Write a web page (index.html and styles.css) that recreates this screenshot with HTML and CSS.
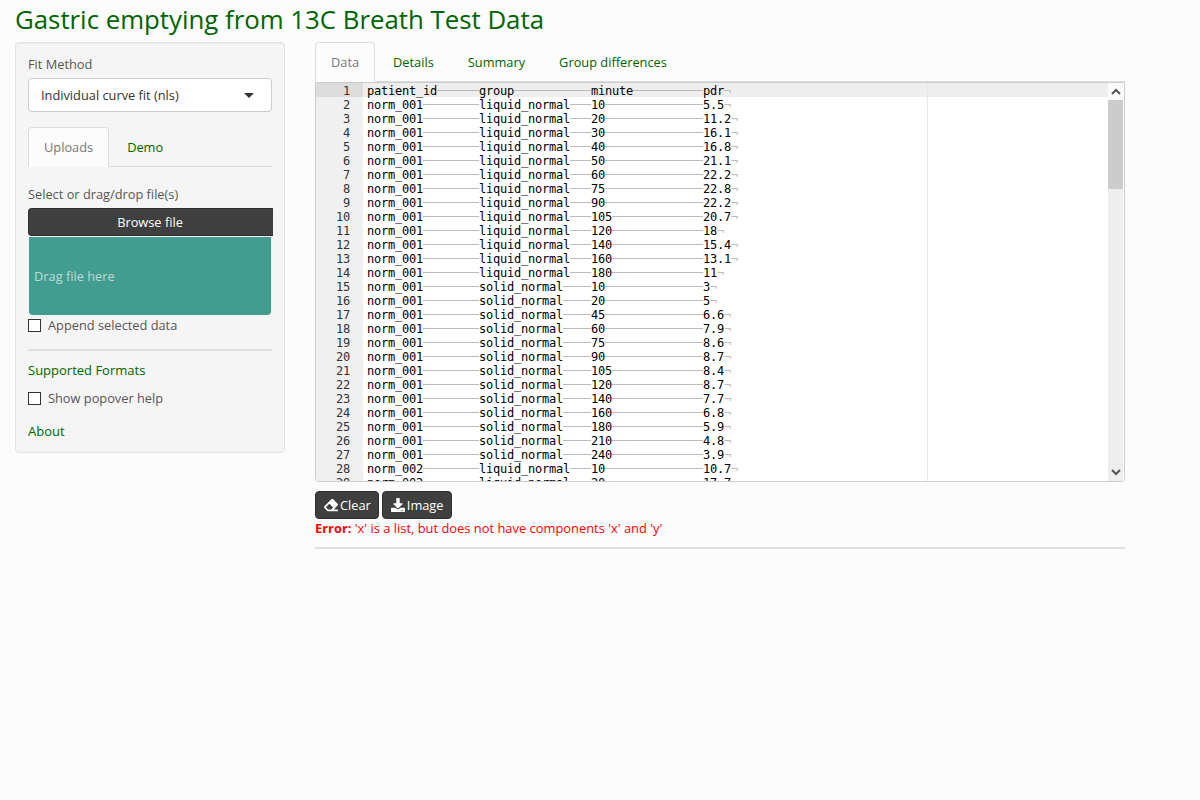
FILE: index.html
```html
<!DOCTYPE html>
<html lang="en">
<head>
    <meta charset="UTF-8">
    <title>Gastric emptying from 13C Breath Test Data</title>
    <link rel="stylesheet" href="styles.css">
</head>
<body>
    <h1 class="title">Gastric emptying from 13C Breath Test Data</h1>
    <div class="layout">
        <aside class="well">
            <div class="label">Fit Method</div>
            <div class="select">
                <span>Individual curve fit (nls)</span>
                <span class="caret"></span>
            </div>
            <ul class="tabs side-tabs">
                <li class="active">Uploads</li>
                <li>Demo</li>
            </ul>
            <div class="label drop-label">Select or drag/drop file(s)</div>
            <div class="browse">Browse file</div>
            <div class="dropzone">Drag file here</div>
            <div class="check append"><span class="box"></span>Append selected data</div>
            <hr class="side-rule">
            <div class="link">Supported Formats</div>
            <div class="check popover"><span class="box"></span>Show popover help</div>
            <div class="link about">About</div>
        </aside>
        <main class="content">
            <ul class="tabs main-tabs">
                <li class="active">Data</li>
                <li>Details</li>
                <li>Summary</li>
                <li>Group differences</li>
            </ul>
            <div class="editor">
                <div class="gutter">
                    <div class="num current">1</div>
                    <div class="num">2</div>
                    <div class="num">3</div>
                    <div class="num">4</div>
                    <div class="num">5</div>
                    <div class="num">6</div>
                    <div class="num">7</div>
                    <div class="num">8</div>
                    <div class="num">9</div>
                    <div class="num">10</div>
                    <div class="num">11</div>
                    <div class="num">12</div>
                    <div class="num">13</div>
                    <div class="num">14</div>
                    <div class="num">15</div>
                    <div class="num">16</div>
                    <div class="num">17</div>
                    <div class="num">18</div>
                    <div class="num">19</div>
                    <div class="num">20</div>
                    <div class="num">21</div>
                    <div class="num">22</div>
                    <div class="num">23</div>
                    <div class="num">24</div>
                    <div class="num">25</div>
                    <div class="num">26</div>
                    <div class="num">27</div>
                    <div class="num">28</div>
                    <div class="num">29</div>
                </div>
                <div class="lines">
                    <div class="ln current"><span class="c">patient_id</span><span class="c">group</span><span class="c">minute</span><span class="e">pdr</span></div>
                    <div class="ln"><span class="c">norm_001</span><span class="c">liquid_normal</span><span class="c">10</span><span class="e">5.5</span></div>
                    <div class="ln"><span class="c">norm_001</span><span class="c">liquid_normal</span><span class="c">20</span><span class="e">11.2</span></div>
                    <div class="ln"><span class="c">norm_001</span><span class="c">liquid_normal</span><span class="c">30</span><span class="e">16.1</span></div>
                    <div class="ln"><span class="c">norm_001</span><span class="c">liquid_normal</span><span class="c">40</span><span class="e">16.8</span></div>
                    <div class="ln"><span class="c">norm_001</span><span class="c">liquid_normal</span><span class="c">50</span><span class="e">21.1</span></div>
                    <div class="ln"><span class="c">norm_001</span><span class="c">liquid_normal</span><span class="c">60</span><span class="e">22.2</span></div>
                    <div class="ln"><span class="c">norm_001</span><span class="c">liquid_normal</span><span class="c">75</span><span class="e">22.8</span></div>
                    <div class="ln"><span class="c">norm_001</span><span class="c">liquid_normal</span><span class="c">90</span><span class="e">22.2</span></div>
                    <div class="ln"><span class="c">norm_001</span><span class="c">liquid_normal</span><span class="c">105</span><span class="e">20.7</span></div>
                    <div class="ln"><span class="c">norm_001</span><span class="c">liquid_normal</span><span class="c">120</span><span class="e">18</span></div>
                    <div class="ln"><span class="c">norm_001</span><span class="c">liquid_normal</span><span class="c">140</span><span class="e">15.4</span></div>
                    <div class="ln"><span class="c">norm_001</span><span class="c">liquid_normal</span><span class="c">160</span><span class="e">13.1</span></div>
                    <div class="ln"><span class="c">norm_001</span><span class="c">liquid_normal</span><span class="c">180</span><span class="e">11</span></div>
                    <div class="ln"><span class="c">norm_001</span><span class="c">solid_normal</span><span class="c">10</span><span class="e">3</span></div>
                    <div class="ln"><span class="c">norm_001</span><span class="c">solid_normal</span><span class="c">20</span><span class="e">5</span></div>
                    <div class="ln"><span class="c">norm_001</span><span class="c">solid_normal</span><span class="c">45</span><span class="e">6.6</span></div>
                    <div class="ln"><span class="c">norm_001</span><span class="c">solid_normal</span><span class="c">60</span><span class="e">7.9</span></div>
                    <div class="ln"><span class="c">norm_001</span><span class="c">solid_normal</span><span class="c">75</span><span class="e">8.6</span></div>
                    <div class="ln"><span class="c">norm_001</span><span class="c">solid_normal</span><span class="c">90</span><span class="e">8.7</span></div>
                    <div class="ln"><span class="c">norm_001</span><span class="c">solid_normal</span><span class="c">105</span><span class="e">8.4</span></div>
                    <div class="ln"><span class="c">norm_001</span><span class="c">solid_normal</span><span class="c">120</span><span class="e">8.7</span></div>
                    <div class="ln"><span class="c">norm_001</span><span class="c">solid_normal</span><span class="c">140</span><span class="e">7.7</span></div>
                    <div class="ln"><span class="c">norm_001</span><span class="c">solid_normal</span><span class="c">160</span><span class="e">6.8</span></div>
                    <div class="ln"><span class="c">norm_001</span><span class="c">solid_normal</span><span class="c">180</span><span class="e">5.9</span></div>
                    <div class="ln"><span class="c">norm_001</span><span class="c">solid_normal</span><span class="c">210</span><span class="e">4.8</span></div>
                    <div class="ln"><span class="c">norm_001</span><span class="c">solid_normal</span><span class="c">240</span><span class="e">3.9</span></div>
                    <div class="ln"><span class="c">norm_002</span><span class="c">liquid_normal</span><span class="c">10</span><span class="e">10.7</span></div>
                    <div class="ln"><span class="c">norm_002</span><span class="c">liquid_normal</span><span class="c">20</span><span class="e">17.7</span></div>
                    <div class="print-margin"></div>
                </div>
                <div class="scrollbar">
                    <div class="scroll-btn top">
                        <svg viewBox="0 0 10 7" width="10" height="7"><path d="M1 6 L5 2 L9 6" fill="none" stroke="#555" stroke-width="2"/></svg>
                    </div>
                    <div class="track"><div class="thumb"></div></div>
                    <div class="scroll-btn">
                        <svg viewBox="0 0 10 7" width="10" height="7"><path d="M1 1 L5 5 L9 1" fill="none" stroke="#555" stroke-width="2"/></svg>
                    </div>
                </div>
            </div>
            <div class="actions">
                <button class="btn">
                    <svg viewBox="0 0 512 512" width="14" height="14"><path fill="#fff" d="M497.941 273.941c18.745-18.745 18.745-49.137 0-67.882l-160-160c-18.745-18.745-49.136-18.746-67.883 0l-256 256c-18.745 18.745-18.745 49.137 0 67.882l96 96A48.004 48.004 0 0 0 144 480h356c6.627 0 12-5.373 12-12v-40c0-6.627-5.373-12-12-12H355.883l142.058-142.059zm-302.627-62.627l137.373 137.373L265.373 416H150.628l-80-80 124.686-124.686z"/></svg>
                    Clear
                </button>
                <button class="btn">
                    <svg viewBox="0 0 512 512" width="14" height="14"><path fill="#fff" d="M216 0h80c13.3 0 24 10.7 24 24v168h87.7c17.8 0 26.7 21.5 14.1 34.1L269.7 378.3c-7.5 7.5-19.8 7.5-27.3 0L90.1 226.1c-12.6-12.6-3.7-34.1 14.1-34.1H192V24c0-13.3 10.7-24 24-24zm296 376v112c0 13.3-10.7 24-24 24H24c-13.3 0-24-10.7-24-24V376c0-13.3 10.7-24 24-24h146.7l49 49c20.1 20.1 52.5 20.1 72.6 0l49-49H488c13.3 0 24 10.7 24 24zm-124 88c0-11-9-20-20-20s-20 9-20 20 9 20 20 20 20-9 20-20zm64 0c0-11-9-20-20-20s-20 9-20 20 9 20 20 20 20-9 20-20z"/></svg>
                    Image
                </button>
            </div>
            <p class="error"><strong>Error:</strong> 'x' is a list, but does not have components 'x' and 'y'</p>
            <hr class="main-rule">
        </main>
    </div>
</body>
</html>
```

FILE: styles.css
```css
* {
    box-sizing: border-box;
}
body {
    margin: 0;
    padding: 0 15px;
    background: #fcfcfc;
    color: #555;
    font-family: "Open Sans", sans-serif;
    font-size: 12.8px;
    line-height: 18px;
}
.title {
    margin: 0;
    height: 42px;
    color: #006400;
    font-size: 25.8px;
    font-weight: 400;
    line-height: 38px;
}
.layout {
    display: flex;
    align-items: flex-start;
    gap: 30px;
}

/* sidebar */
.well {
    width: 270px;
    height: 411px;
    padding: 12px 12px;
    background: #f5f5f5;
    border: 1px solid #e3e3e3;
    border-radius: 4px;
    box-shadow: inset 0 1px 1px rgba(0, 0, 0, 0.05);
}
.label {
    margin-top: 0;
    color: #555;
}
.select {
    display: flex;
    justify-content: space-between;
    align-items: center;
    height: 34px;
    margin-top: 5px;
    padding: 0 17px 0 12px;
    background: #fff;
    border: 1px solid #ccc;
    border-radius: 4px;
    color: #333;
}
.caret {
    width: 0;
    height: 0;
    border-left: 5px solid transparent;
    border-right: 5px solid transparent;
    border-top: 5px solid #333;
}
.tabs {
    display: flex;
    margin: 0;
    padding: 0;
    list-style: none;
    border-bottom: 1px solid #ddd;
}
.tabs li {
    height: 39px;
    padding: 10px 15px 0;
    margin-right: 2px;
    color: #006400;
    border: 1px solid transparent;
    border-radius: 4px 4px 0 0;
}
.tabs li.active {
    height: 40px;
    margin-bottom: -1px;
    color: #777;
    background: #fcfcfc;
    border-color: #ddd #ddd #fcfcfc;
}
.side-tabs {
    margin-top: 15px;
}
.drop-label {
    margin-top: 18px;
}
.browse {
    height: 28px;
    margin-top: 5px;
    margin-right: -1px;
    padding-right: 2px;
    background: #3f3f3f;
    border: 1px solid #2e2e2e;
    border-right: 0;
    border-radius: 4px 0 0 4px;
    color: #fff;
    text-align: center;
    line-height: 26px;
}
.dropzone {
    height: 78px;
    margin: 1px 1px 0;
    padding-left: 5px;
    background: #419d8f;
    border-radius: 0 0 4px 4px;
    color: rgba(255, 255, 255, 0.65);
    line-height: 78px;
}
.check {
    display: flex;
    align-items: center;
    gap: 7px;
}
.box {
    width: 13px;
    height: 13px;
    background: #fff;
    border: 1px solid #333;
}
.append {
    margin-top: 1px;
}
.side-rule {
    height: 2px;
    margin: 15px 0 0;
    background: #e0e0e0;
    border: 0;
}
.link {
    color: #006400;
    font-size: 13px;
}
.side-rule + .link {
    margin-top: 10px;
}
.popover {
    margin-top: 10px;
}
.about {
    margin-top: 15px;
}

/* main panel */
.content {
    width: 810px;
}
.editor {
    display: flex;
    height: 400px;
    overflow: hidden;
    background: #fff;
    border: 1px solid #ccc;
    border-radius: 0 0 4px 4px;
    font-family: "DejaVu Sans Mono", monospace;
    font-size: 12px;
    letter-spacing: -0.22px;
    line-height: 16px;
    color: #000;
}
.gutter {
    flex: none;
    width: 47px;
    height: 100%;
    background: #f0f0f0;
    color: #333;
}
.num {
    height: 14px;
    padding-right: 13px;
    text-align: right;
}
.num.current {
    background: #dcdcdc;
}
.lines {
    position: relative;
    flex: 1;
    overflow: hidden;
}
.ln {
    display: flex;
    height: 14px;
    padding-left: 4px;
}
.ln.current {
    background: #eee;
}
.c {
    display: flex;
    width: 112px;
}
.c::after {
    content: "";
    flex: 1;
    align-self: center;
    border-top: 1px solid #bbb;
}
.e::after {
    content: "¬";
    color: #bbb;
}
.print-margin {
    position: absolute;
    top: 0;
    bottom: 0;
    left: 564px;
    width: 1px;
    background: #e8e8e8;
}
.scrollbar {
    flex: none;
    display: flex;
    flex-direction: column;
    width: 16px;
    border-right: 1px solid #fff;
    background: #eee;
}
.scroll-btn {
    flex: none;
    display: flex;
    align-items: center;
    justify-content: center;
    height: 17px;
}
.scroll-btn.top {
    background: #fbfbfb;
}
.track {
    flex: 1;
}
.thumb {
    height: 89px;
    background: #ccc;
}
.actions {
    display: flex;
    gap: 3px;
    margin-top: 9px;
}
.btn {
    display: flex;
    align-items: center;
    gap: 2px;
    height: 28px;
    padding: 0 7px 0 8px;
    background: #3f3f3f;
    border: 1px solid #2e2e2e;
    border-radius: 4px;
    color: #fff;
    font-family: "Open Sans", sans-serif;
    font-size: 12.8px;
}
.error {
    margin: 0;
    color: #f00;
    font-size: 12.9px;
}
.main-rule {
    height: 2px;
    margin: 10px 0 0;
    background: #e0e0e0;
    border: 0;
}
```
